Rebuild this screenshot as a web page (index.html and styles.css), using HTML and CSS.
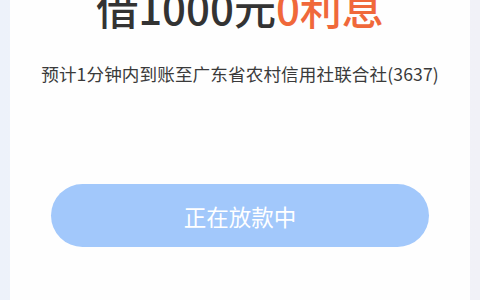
FILE: index.html
```html
<!DOCTYPE html>
<html lang="zh-CN">
<head>
<meta charset="utf-8">
<link rel="stylesheet" href="styles.css">
</head>
<body>
<div class="page">
  <div class="card">
    <h1 class="title">借1000元<span class="accent">0利息</span></h1>
    <p class="sub">预计1分钟内到账至广东省农村信用社联合社(3637)</p>
    <div class="btn-wrap">
      <button class="btn" type="button">正在放款中</button>
    </div>
  </div>
</div>
</body>
</html>
```
FILE: styles.css
```css
html, body {
  margin: 0;
  padding: 0;
}
body {
  width: 480px;
  height: 300px;
  overflow: hidden;
  font-family: "Noto Sans CJK SC", "Noto Sans", sans-serif;
  background: linear-gradient(90deg, #edf2fa 0%, #f1f3f9 50%, #f1f1f7 100%);
}
.page {
  padding: 0 10px;
  height: 300px;
}
.card {
  background: #fefefe;
  height: 300px;
  display: flex;
  flex-direction: column;
  align-items: center;
}
.title {
  margin: -17px 0 0;
  font-size: 42px;
  line-height: 48px;
  font-weight: 500;
  color: #333333;
  letter-spacing: 0;
}
.accent {
  color: #f0683a;
}
.sub {
  margin: 31px 0 0;
  font-size: 17.6px;
  line-height: 24px;
  color: #3a3a3a;
  letter-spacing: 0.1px;
}
.btn-wrap {
  margin-top: 98px;
}
.btn {
  width: 378px;
  height: 63px;
  border: none;
  border-radius: 32px;
  background: #a2c8fb;
  color: #ffffff;
  font-family: inherit;
  font-size: 22.5px;
  padding: 0;
}
```
